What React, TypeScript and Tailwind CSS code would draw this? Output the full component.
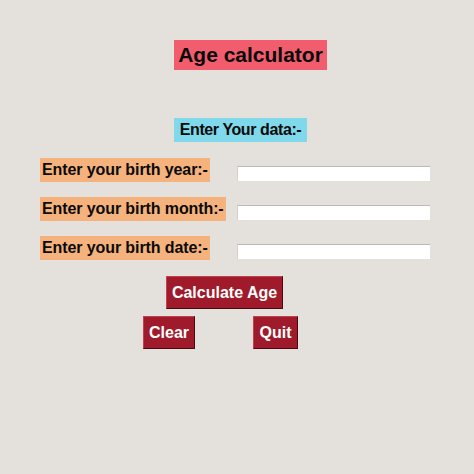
const rows = [
  { label: "Enter your birth year:-", mt: "mt-[16px]" },
  { label: "Enter your birth month:-", mt: "mt-[15px]" },
  { label: "Enter your birth date:-", mt: "mt-[15px]" },
];

function TkButton({ children, className }: { children: React.ReactNode; className?: string }) {
  return (
    <button
      type="button"
      className={`flex h-[33px] items-center justify-center border border-t-[#c24050] border-l-[#c24050] border-r-[#4a0810] border-b-[#4a0810] bg-[#9f1b2b] text-[16px] font-bold text-white ${className ?? ""}`}
    >
      {children}
    </button>
  );
}

export default function App() {
  return (
    <div
      className="flex h-[474px] w-[474px] flex-col bg-[#e4e1dd] pt-[40px] text-[#0a0a0a]"
      style={{ fontFamily: '"Liberation Sans", Arial, sans-serif' }}
    >
      <div className="ml-[174px] flex h-[30px] w-[153px] items-center justify-center bg-[#f25d6d] text-[21px] font-bold">
        Age calculator
      </div>

      <div className="ml-[174px] mt-[48px] flex h-[24px] w-[133px] items-center justify-center bg-[#80d9ea] text-[16px] font-bold tracking-[-0.4px]">
        Enter Your data:-
      </div>

      <div className="ml-[40px] flex flex-col">
        {rows.map((r) => (
          <div key={r.label} className={`flex items-start ${r.mt}`}>
            <div className="flex h-[24px] items-center bg-[#f5b27c] px-[2px] text-[16px] font-bold tracking-[-0.1px]">
              {r.label}
            </div>
            <div className="flex-1" />
            <input
              type="text"
              className="mr-[44px] mt-[8px] h-[15px] w-[193px] border-t border-l border-t-[#bdbab5] border-l-[#d4d1cc] bg-white outline-none"
            />
          </div>
        ))}
      </div>

      <TkButton className="ml-[166px] mt-[16px] w-[117px]">Calculate Age</TkButton>

      <div className="mt-[7px] flex">
        <TkButton className="ml-[143px] w-[52px]">Clear</TkButton>
        <TkButton className="ml-[58px] w-[45px]">Quit</TkButton>
      </div>
    </div>
  );
}
